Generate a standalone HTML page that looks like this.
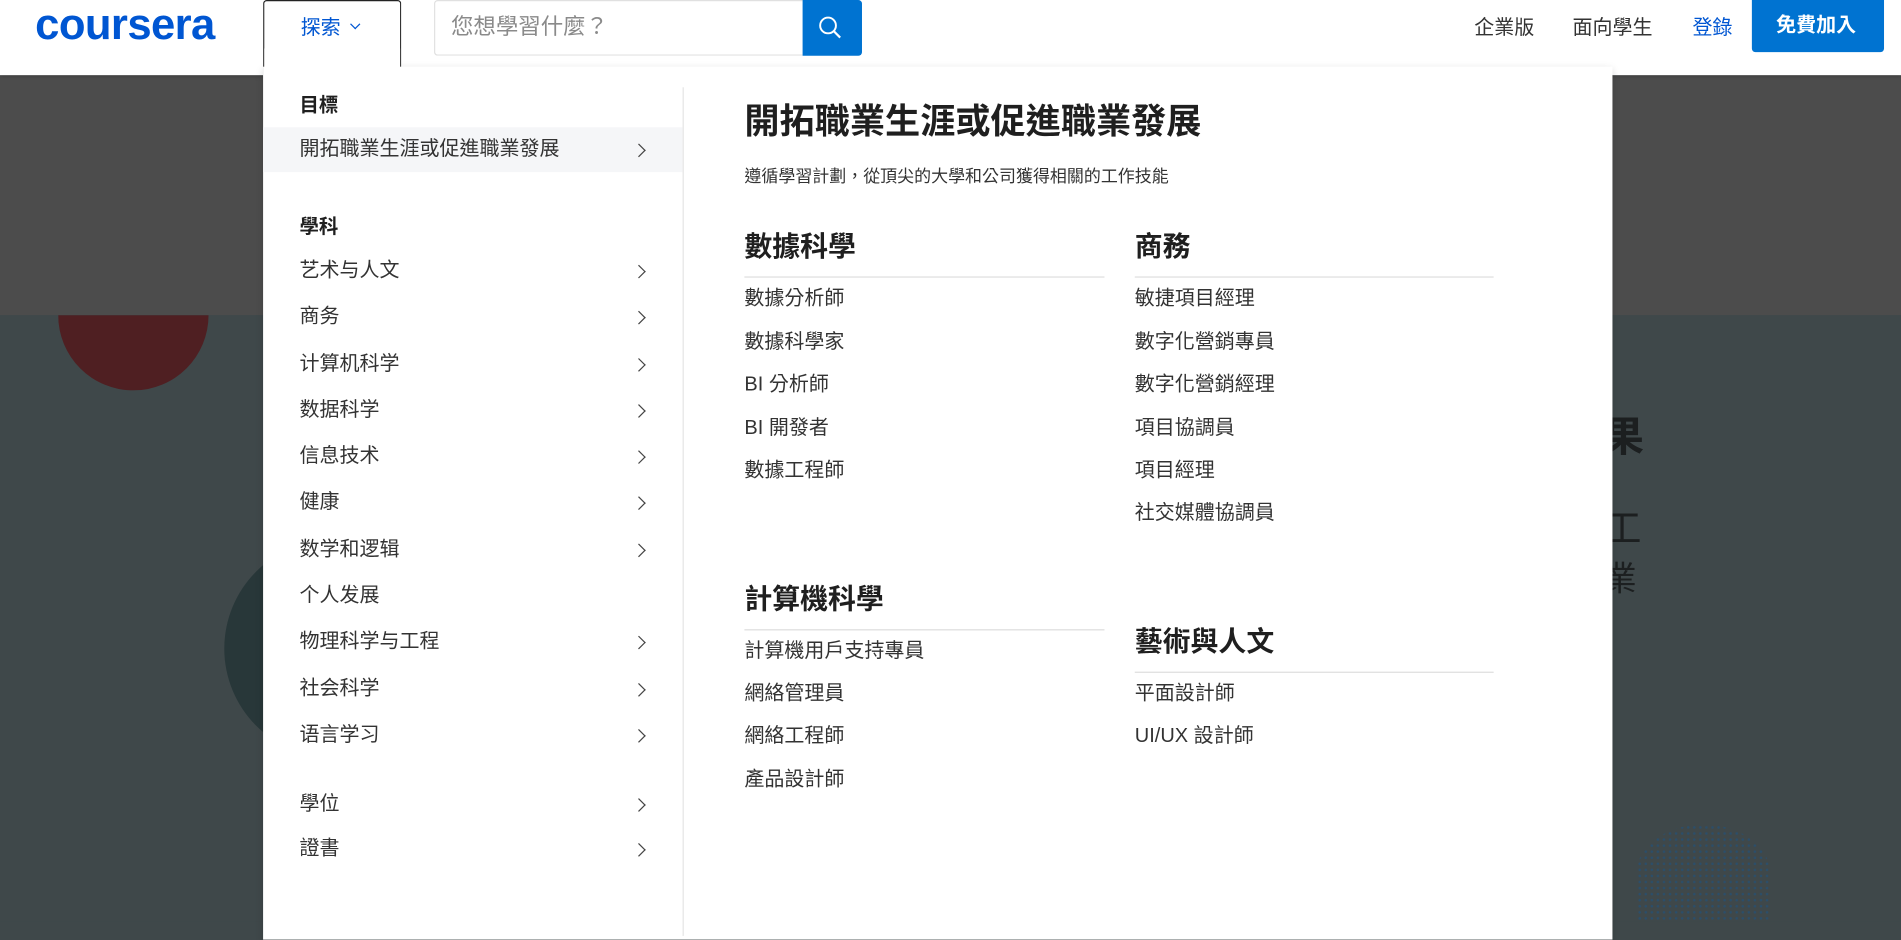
<!DOCTYPE html>
<html><head><meta charset="utf-8"><style>
*{margin:0;padding:0;box-sizing:border-box}
html,body{width:1901px;height:878px;overflow:hidden;background:#3f484a}
#w{position:absolute;left:0;top:0;width:1568px;height:724px;transform:scale(1.21237);transform-origin:0 0;font-family:"Liberation Sans","Noto Sans CJK TC",sans-serif;color:#1f1f1f}
.a{position:absolute;white-space:nowrap;line-height:24px}
.chev{position:absolute;width:8px;height:8px;border-right:1.3px solid #444;border-top:1.3px solid #444;transform:rotate(45deg)}
</style></head><body><div id="w">
<div style="position:absolute;left:0;top:62px;width:1568px;height:198px;background:#4c4c4c"></div>
<div style="position:absolute;left:0;top:260px;width:1568px;height:500px;background:#3f484a"></div>
<div style="position:absolute;left:48px;top:198px;width:124px;height:124px;border-radius:50%;background:#4f1f22;clip-path:inset(62px 0 0 0)"></div>
<div style="position:absolute;left:185px;top:445px;width:180px;height:180px;border-radius:50%;background:#283739"></div>
<div class="a" style="left:1322px;top:343px;font-size:34px;line-height:36px;font-weight:bold;color:#1c1f20">果</div>
<div class="a" style="left:1322px;top:418px;font-size:32px;line-height:36px;color:#1c1f20">工</div>
<div class="a" style="left:1322px;top:462px;font-size:28px;line-height:32px;color:#1c1f20">業</div>
<div style="position:absolute;left:1350px;top:680px;width:110px;height:80px;border-radius:50% 50% 0 0;background:radial-gradient(circle,#2b4e6a 0.8px,transparent 1.3px) 0 0/5px 5px"></div>
<!-- header -->
<div style="position:absolute;left:0;top:0;width:1568px;height:62px;background:#fff;box-shadow:0 1px 3px rgba(0,0,0,.2)"></div>
<div class="a" style="left:29px;top:0px;font-size:36px;line-height:40px;font-weight:bold;color:#0056d2;letter-spacing:-0.5px">coursera</div>
<div style="position:absolute;left:217px;top:0;width:114px;height:62px;background:#fff;border:1px solid #222;border-bottom:none;border-radius:3px 3px 0 0"></div>
<div class="a" style="left:248px;top:11px;font-size:16.5px;color:#0056d2">探索</div>
<div class="chev" style="left:290px;top:17px;width:6px;height:6px;border-color:#0056d2;border-width:1.8px;transform:rotate(135deg)"></div>
<div style="position:absolute;left:358px;top:0;width:304px;height:46px;border:1px solid #e0e0e0;border-right:none;border-radius:3px 0 0 3px"></div>
<div class="a" style="left:372px;top:9px;font-size:18.5px;line-height:26px;color:#8a8a8a">您想學習什麼？</div>
<div style="position:absolute;left:662px;top:0;width:49px;height:46px;background:#0073d1;border-radius:0 3px 3px 0"></div>
<svg style="position:absolute;left:673px;top:11px" width="24" height="24" viewBox="0 0 24 24"><circle cx="10" cy="10" r="6.5" fill="none" stroke="#fff" stroke-width="1.6"/><path d="M14.7 14.7L20 20" stroke="#fff" stroke-width="1.8"/></svg>
<div class="a" style="left:1216px;top:11px;font-size:16.5px;color:#333">企業版</div>
<div class="a" style="left:1297px;top:11px;font-size:16.5px;color:#333">面向學生</div>
<div class="a" style="left:1396px;top:11px;font-size:16.5px;color:#0056d2">登錄</div>
<div style="position:absolute;left:1445px;top:0;width:109px;height:43px;background:#0073d1;border-radius:0 0 3px 3px"></div>
<div class="a" style="left:1465px;top:9px;font-size:16.5px;font-weight:bold;color:#fff">免費加入</div>
<!-- dropdown -->
<div style="position:absolute;left:217px;top:55px;width:1113px;height:720px;background:#fff;box-shadow:0 2px 6px rgba(0,0,0,.15)"></div>
<div style="position:absolute;left:218px;top:40px;width:112px;height:20px;background:#fff"></div>
<div style="position:absolute;left:563px;top:72px;width:1px;height:700px;background:#e5e5e5"></div>
<div style="position:absolute;left:217px;top:105px;width:346px;height:37px;background:#f5f6f8"></div>
<div class="a" style="left:247px;top:76px;font-size:16px;font-weight:bold">目標</div>
<div class="a" style="left:247px;top:111px;font-size:16.5px;color:#333">開拓職業生涯或促進職業發展</div>
<div class="chev" style="left:523px;top:120px"></div>
<div class="a" style="left:247px;top:176px;font-size:16px;font-weight:bold">學科</div>
<div class="a" style="left:247px;top:211px;font-size:16.5px;color:#333">艺术与人文</div><div class="chev" style="left:523px;top:220px"></div>
<div class="a" style="left:247px;top:249px;font-size:16.5px;color:#333">商务</div><div class="chev" style="left:523px;top:258px"></div>
<div class="a" style="left:247px;top:288px;font-size:16.5px;color:#333">计算机科学</div><div class="chev" style="left:523px;top:297px"></div>
<div class="a" style="left:247px;top:326px;font-size:16.5px;color:#333">数据科学</div><div class="chev" style="left:523px;top:335px"></div>
<div class="a" style="left:247px;top:364px;font-size:16.5px;color:#333">信息技术</div><div class="chev" style="left:523px;top:373px"></div>
<div class="a" style="left:247px;top:402px;font-size:16.5px;color:#333">健康</div><div class="chev" style="left:523px;top:411px"></div>
<div class="a" style="left:247px;top:441px;font-size:16.5px;color:#333">数学和逻辑</div><div class="chev" style="left:523px;top:450px"></div>
<div class="a" style="left:247px;top:479px;font-size:16.5px;color:#333">个人发展</div>
<div class="a" style="left:247px;top:517px;font-size:16.5px;color:#333">物理科学与工程</div><div class="chev" style="left:523px;top:526px"></div>
<div class="a" style="left:247px;top:556px;font-size:16.5px;color:#333">社会科学</div><div class="chev" style="left:523px;top:565px"></div>
<div class="a" style="left:247px;top:594px;font-size:16.5px;color:#333">语言学习</div><div class="chev" style="left:523px;top:603px"></div>
<div class="a" style="left:247px;top:651px;font-size:16.5px;color:#333">學位</div><div class="chev" style="left:523px;top:660px"></div>
<div class="a" style="left:247px;top:688px;font-size:16.5px;color:#333">證書</div><div class="chev" style="left:523px;top:697px"></div>
<div class="a" style="left:614px;top:83px;font-size:29px;line-height:36px;font-weight:bold;color:#1f1f1f">開拓職業生涯或促進職業發展</div>
<div class="a" style="left:614px;top:134px;font-size:14px;line-height:22px;color:#333">遵循學習計劃，從頂尖的大學和公司獲得相關的工作技能</div>
<div class="a" style="left:614px;top:188px;font-size:23px;line-height:30px;font-weight:bold">數據科學</div>
<div style="position:absolute;left:614px;top:228px;width:297px;height:1px;background:#ddd"></div>
<div class="a" style="left:614px;top:234px;font-size:16.5px;color:#333">數據分析師</div>
<div class="a" style="left:614px;top:270px;font-size:16.5px;color:#333">數據科學家</div>
<div class="a" style="left:614px;top:305px;font-size:16.5px;color:#333">BI 分析師</div>
<div class="a" style="left:614px;top:341px;font-size:16.5px;color:#333">BI 開發者</div>
<div class="a" style="left:614px;top:376px;font-size:16.5px;color:#333">數據工程師</div>
<div class="a" style="left:936px;top:188px;font-size:23px;line-height:30px;font-weight:bold">商務</div>
<div style="position:absolute;left:936px;top:228px;width:296px;height:1px;background:#ddd"></div>
<div class="a" style="left:936px;top:234px;font-size:16.5px;color:#333">敏捷項目經理</div>
<div class="a" style="left:936px;top:270px;font-size:16.5px;color:#333">數字化營銷專員</div>
<div class="a" style="left:936px;top:305px;font-size:16.5px;color:#333">數字化營銷經理</div>
<div class="a" style="left:936px;top:341px;font-size:16.5px;color:#333">項目協調員</div>
<div class="a" style="left:936px;top:376px;font-size:16.5px;color:#333">項目經理</div>
<div class="a" style="left:936px;top:411px;font-size:16.5px;color:#333">社交媒體協調員</div>
<div class="a" style="left:614px;top:479px;font-size:23px;line-height:30px;font-weight:bold">計算機科學</div>
<div style="position:absolute;left:614px;top:519px;width:297px;height:1px;background:#ddd"></div>
<div class="a" style="left:614px;top:525px;font-size:16.5px;color:#333">計算機用戶支持專員</div>
<div class="a" style="left:614px;top:560px;font-size:16.5px;color:#333">網絡管理員</div>
<div class="a" style="left:614px;top:595px;font-size:16.5px;color:#333">網絡工程師</div>
<div class="a" style="left:614px;top:631px;font-size:16.5px;color:#333">產品設計師</div>
<div class="a" style="left:936px;top:514px;font-size:23px;line-height:30px;font-weight:bold">藝術與人文</div>
<div style="position:absolute;left:936px;top:554px;width:296px;height:1px;background:#ddd"></div>
<div class="a" style="left:936px;top:560px;font-size:16.5px;color:#333">平面設計師</div>
<div class="a" style="left:936px;top:595px;font-size:16.5px;color:#333">UI/UX 設計師</div>
</div></body></html>
